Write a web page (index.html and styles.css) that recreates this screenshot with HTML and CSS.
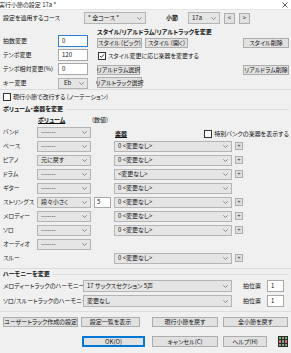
FILE: index.html
```html
<!DOCTYPE html>
<html lang="ja">
<head>
<meta charset="utf-8">
<title>実行小節の設定</title>
<link rel="stylesheet" href="styles.css">
</head>
<body>
<div class="win">
  <div class="titlebar">
    <span class="title">実行小節の設定 17a *</span>
    <svg class="close" width="6" height="6" viewBox="0 0 6 6"><path d="M0.5 0.5L5.5 5.5M5.5 0.5L0.5 5.5" stroke="#333" stroke-width="0.8"/></svg>
  </div>
  <div class="content">
    <div class="course">
      <span class="course-lbl">設定を適用するコース</span>
      <div class="sel w-course"><span>* 全コース *</span><svg class="chev" width="5" height="3" viewBox="0 0 5 3"><path d="M0.3 0.3L2.5 2.5L4.7 0.3" fill="none" stroke="#666" stroke-width="0.7"/></svg></div>
      <span class="bold bar-lbl">小節</span>
      <div class="sel w-bar"><span>17a</span><svg class="chev" width="5" height="3" viewBox="0 0 5 3"><path d="M0.3 0.3L2.5 2.5L4.7 0.3" fill="none" stroke="#666" stroke-width="0.7"/></svg></div>
      <button class="btn nav">&lt;</button>
      <button class="btn nav">&gt;</button>
    </div>

    <div class="top">
      <div class="tleft">
        <div class="frow"><span>拍数変更</span><div class="inp focus">0</div></div>
        <div class="frow"><span>テンポ変更</span><div class="inp">120</div></div>
        <div class="frow"><span>テンポ相対変更(%)</span><div class="inp">0</div></div>
        <div class="frow"><span>キー変更</span><div class="sel w-key"><span>Eb</span><svg class="chev" width="5" height="3" viewBox="0 0 5 3"><path d="M0.3 0.3L2.5 2.5L4.7 0.3" fill="none" stroke="#666" stroke-width="0.7"/></svg></div></div>
      </div>
      <div class="tright">
        <div class="cap bold">スタイル/リアルドラム/リアルトラックを変更</div>
        <div class="brow b1">
          <button class="btn w-pick">スタイル (ピック)</button>
          <button class="btn w-open">スタイル (開く)</button>
          <button class="btn w-del push">スタイル削除</button>
        </div>
        <div class="chkrow c1"><span class="chk on"><svg width="6" height="6" viewBox="0 0 6 6"><path d="M1 3L2.4 4.5L5 1.3" fill="none" stroke="#222" stroke-width="0.9"/></svg></span>スタイル変更に応じ楽器を変更する</div>
        <div class="brow b2">
          <button class="btn w-rd">リアルドラム選択</button>
          <button class="btn w-del push">リアルドラム削除</button>
        </div>
        <div class="brow b3">
          <button class="btn w-rt">リアルトラック選択</button>
        </div>
      </div>
    </div>

    <div class="sep s1"></div>

    <div class="chkrow c2"><span class="chk"></span>現行小節で改行する (ノーテーション)</div>

    <div class="gcap g1"><span class="bold">ボリューム・楽器を変更</span><span class="gline"></span></div>

    <div class="vgrid">
      <div class="vhead"><span></span><span class="bold ul vol-h">ボリューム</span><span class="num-h">(数値)</span><span></span><span></span></div>

      <div class="vrow"><span class="vlab">バンド</span><div class="sel"><span>-------</span><svg class="chev" width="5" height="3" viewBox="0 0 5 3"><path d="M0.3 0.3L2.5 2.5L4.7 0.3" fill="none" stroke="#666" stroke-width="0.7"/></svg></div><span></span><div class="inst-head"><span class="bold ul">楽器</span><span class="special"><span class="chk"></span>特別バンクの楽器を表示する</span></div></div>

      <div class="vrow"><span class="vlab">ベース</span><div class="sel"><span>-------</span><svg class="chev" width="5" height="3" viewBox="0 0 5 3"><path d="M0.3 0.3L2.5 2.5L4.7 0.3" fill="none" stroke="#666" stroke-width="0.7"/></svg></div><span></span><div class="sel"><span>0 &lt;変更なし&gt;</span><svg class="chev" width="5" height="3" viewBox="0 0 5 3"><path d="M0.3 0.3L2.5 2.5L4.7 0.3" fill="none" stroke="#666" stroke-width="0.7"/></svg></div><button class="btn plus">+</button></div>

      <div class="vrow"><span class="vlab">ピアノ</span><div class="sel"><span>元に戻す</span><svg class="chev" width="5" height="3" viewBox="0 0 5 3"><path d="M0.3 0.3L2.5 2.5L4.7 0.3" fill="none" stroke="#666" stroke-width="0.7"/></svg></div><span></span><div class="sel"><span>0 &lt;変更なし&gt;</span><svg class="chev" width="5" height="3" viewBox="0 0 5 3"><path d="M0.3 0.3L2.5 2.5L4.7 0.3" fill="none" stroke="#666" stroke-width="0.7"/></svg></div><button class="btn plus">+</button></div>

      <div class="vrow"><span class="vlab">ドラム</span><div class="sel"><span>-------</span><svg class="chev" width="5" height="3" viewBox="0 0 5 3"><path d="M0.3 0.3L2.5 2.5L4.7 0.3" fill="none" stroke="#666" stroke-width="0.7"/></svg></div><span></span><div class="sel"><span>&lt;変更なし&gt;</span><svg class="chev" width="5" height="3" viewBox="0 0 5 3"><path d="M0.3 0.3L2.5 2.5L4.7 0.3" fill="none" stroke="#666" stroke-width="0.7"/></svg></div><button class="btn plus">+</button></div>

      <div class="vrow"><span class="vlab">ギター</span><div class="sel"><span>-------</span><svg class="chev" width="5" height="3" viewBox="0 0 5 3"><path d="M0.3 0.3L2.5 2.5L4.7 0.3" fill="none" stroke="#666" stroke-width="0.7"/></svg></div><span></span><div class="sel"><span>0 &lt;変更なし&gt;</span><svg class="chev" width="5" height="3" viewBox="0 0 5 3"><path d="M0.3 0.3L2.5 2.5L4.7 0.3" fill="none" stroke="#666" stroke-width="0.7"/></svg></div><span></span></div>

      <div class="vrow"><span class="vlab">ストリングス</span><div class="sel"><span>段々小さく</span><svg class="chev" width="5" height="3" viewBox="0 0 5 3"><path d="M0.3 0.3L2.5 2.5L4.7 0.3" fill="none" stroke="#666" stroke-width="0.7"/></svg></div><div class="inp num">5</div><div class="sel"><span>0 &lt;変更なし&gt;</span><svg class="chev" width="5" height="3" viewBox="0 0 5 3"><path d="M0.3 0.3L2.5 2.5L4.7 0.3" fill="none" stroke="#666" stroke-width="0.7"/></svg></div><button class="btn plus">+</button></div>

      <div class="vrow"><span class="vlab">メロディー</span><div class="sel"><span>-------</span><svg class="chev" width="5" height="3" viewBox="0 0 5 3"><path d="M0.3 0.3L2.5 2.5L4.7 0.3" fill="none" stroke="#666" stroke-width="0.7"/></svg></div><span></span><div class="sel"><span>0 &lt;変更なし&gt;</span><svg class="chev" width="5" height="3" viewBox="0 0 5 3"><path d="M0.3 0.3L2.5 2.5L4.7 0.3" fill="none" stroke="#666" stroke-width="0.7"/></svg></div><button class="btn plus">+</button></div>

      <div class="vrow"><span class="vlab">ソロ</span><div class="sel"><span>-------</span><svg class="chev" width="5" height="3" viewBox="0 0 5 3"><path d="M0.3 0.3L2.5 2.5L4.7 0.3" fill="none" stroke="#666" stroke-width="0.7"/></svg></div><span></span><div class="sel"><span>0 &lt;変更なし&gt;</span><svg class="chev" width="5" height="3" viewBox="0 0 5 3"><path d="M0.3 0.3L2.5 2.5L4.7 0.3" fill="none" stroke="#666" stroke-width="0.7"/></svg></div><button class="btn plus">+</button></div>

      <div class="vrow"><span class="vlab">オーディオ</span><div class="sel"><span>-------</span><svg class="chev" width="5" height="3" viewBox="0 0 5 3"><path d="M0.3 0.3L2.5 2.5L4.7 0.3" fill="none" stroke="#666" stroke-width="0.7"/></svg></div><span></span><span></span><span></span></div>

      <div class="vrow"><span class="vlab">スルー</span><span></span><span></span><div class="sel"><span>0 &lt;変更なし&gt;</span><svg class="chev" width="5" height="3" viewBox="0 0 5 3"><path d="M0.3 0.3L2.5 2.5L4.7 0.3" fill="none" stroke="#666" stroke-width="0.7"/></svg></div><button class="btn plus">+</button></div>
    </div>

    <div class="sep s2"></div>

    <div class="gcap g2"><span class="bold">ハーモニーを変更</span><span class="gline"></span></div>

    <div class="hrow h1">
      <span class="hlab">メロディートラックのハーモニー</span>
      <div class="sel w-harm"><span>17 サックスセクション 5声</span><svg class="chev" width="5" height="3" viewBox="0 0 5 3"><path d="M0.3 0.3L2.5 2.5L4.7 0.3" fill="none" stroke="#666" stroke-width="0.7"/></svg></div>
      <span class="pos-lbl">拍位置</span>
      <div class="inp w-pos">1</div>
    </div>
    <div class="hrow h2">
      <span class="hlab">ソロ/スルートラックのハーモニー</span>
      <div class="sel w-harm"><span>変更なし</span><svg class="chev" width="5" height="3" viewBox="0 0 5 3"><path d="M0.3 0.3L2.5 2.5L4.7 0.3" fill="none" stroke="#666" stroke-width="0.7"/></svg></div>
      <span class="pos-lbl">拍位置</span>
      <div class="inp w-pos">1</div>
    </div>

    <div class="sep s3"></div>

    <div class="actions a1">
      <button class="btn w-user">ユーザートラック作成の設定</button>
      <button class="btn w-list">設定一覧を表示</button>
      <button class="btn w-cur">現行小節を戻す</button>
      <button class="btn w-all">全小節を戻す</button>
    </div>
    <div class="actions a2">
      <button class="btn ok">OK(O)</button>
      <button class="btn w-cur">キャンセル(C)</button>
      <button class="btn w-help">ヘルプ(H)</button>
      <svg class="appicon" width="10" height="11" viewBox="0 0 10 11">
        <rect x="0" y="0" width="10" height="11" fill="#2b2b2b"/>
        <rect x="1" y="1" width="2" height="2" fill="#6fbf5a"/>
        <rect x="4" y="1" width="2" height="2" fill="#9a9a9a"/>
        <rect x="7" y="1" width="2" height="2" fill="#6fbf5a"/>
        <rect x="1" y="4" width="2" height="3" fill="#e06a8a"/>
        <rect x="4" y="4" width="2" height="3" fill="#5fb85a"/>
        <rect x="7" y="4" width="2" height="3" fill="#e06a8a"/>
        <rect x="1" y="8" width="2" height="2" fill="#9a9a9a"/>
        <rect x="4" y="8" width="2" height="2" fill="#6fbf5a"/>
        <rect x="7" y="8" width="2" height="2" fill="#9a9a9a"/>
      </svg>
    </div>
  </div>
</div>
</body>
</html>
```

FILE: styles.css
```css
* { box-sizing: border-box; margin: 0; padding: 0; }

html, body {
  width: 291px;
  height: 353px;
  overflow: hidden;
}

body {
  font-family: "Noto Sans CJK JP", "Noto Sans", "Liberation Sans", sans-serif;
  font-size: 6px;
  line-height: 1;
  color: #111;
  background: #f0f0f0;
  font-feature-settings: "palt" 1;
}

.win {
  width: 291px;
  height: 353px;
  background: #f0f0f0;
}

.titlebar {
  height: 10px;
  background: #fff;
  display: flex;
  align-items: center;
  justify-content: space-between;
  padding: 0 3px 0 0;
  border-bottom: 1px solid #e4e4e4;
}
.title { font-size: 6px; color: #222; margin-left: -1px; }
.close { display: block; }

.content { padding: 0 2px 0 3px; }

.bold { font-weight: 700; }
.ul { text-decoration: underline; }

/* generic controls */
.sel {
  height: 11px;
  background: #e5e5e5;
  border: 1px solid #b4b4b4;
  display: flex;
  align-items: center;
  justify-content: space-between;
  padding: 0 3px 0 3px;
  white-space: nowrap;
}
.chev { flex: none; display: block; }

.inp {
  height: 12px;
  background: #fff;
  border: 1px solid #a8a8a8;
  display: flex;
  align-items: center;
  padding-left: 3px;
}
.inp.focus { border-color: #2a7fd4; }

.btn {
  font: inherit;
  font-feature-settings: "palt" 1;
  color: #111;
  background: #e1e1e1;
  border: 1px solid #adadad;
  height: 10px;
  display: flex;
  align-items: center;
  justify-content: center;
  white-space: nowrap;
  line-height: 1;
  padding: 0;
  overflow: visible;
}

.chk {
  width: 8px;
  height: 8px;
  background: #fff;
  border: 1px solid #333;
  display: inline-flex;
  align-items: center;
  justify-content: center;
  flex: none;
}
.chk svg { display: block; }

/* course row */
.course {
  margin-top: 2px;
  height: 12px;
  display: flex;
  align-items: center;
}
.course-lbl { width: 81px; }
.w-course { width: 62px; height: 12px; }
.bar-lbl { margin-left: 20px; width: 22px; }
.w-bar { width: 32px; height: 12px; }
.btn.nav { width: 11px; height: 11px; margin-left: 4px; }

/* top section */
.top {
  margin-top: 4px;
  height: 61px;
  display: flex;
}
.tleft {
  width: 85px;
  padding-top: 7px;
  display: flex;
  flex-direction: column;
  gap: 2px;
}
.frow {
  height: 12px;
  display: flex;
  align-items: center;
  justify-content: space-between;
  white-space: nowrap;
}
.frow .inp { width: 30px; }
.w-key { width: 30px; height: 11px; padding-left: 5px; }

.tright {
  margin-left: 9px;
  flex: 1;
  display: flex;
  flex-direction: column;
}
.cap { height: 7px; line-height: 7px; white-space: nowrap; }
.brow { display: flex; align-items: center; }
.b1 { margin-top: 3px; }
.b2 { margin-top: 4px; }
.b3 { margin-top: 2px; }
.b3 .btn { height: 11px; }
.push { margin-left: auto; }
.w-pick { width: 45px; }
.w-open { width: 43px; margin-left: 3px; }
.w-del { width: 46px; }
.w-rd { width: 43px; }
.w-rt { width: 45px; }

.chkrow {
  display: flex;
  align-items: center;
  gap: 2px;
  white-space: nowrap;
}
.c1 { margin-top: 3px; height: 10px; margin-left: 1px; }
.c2 { margin-top: 3px; height: 8px; }

.sep { height: 1px; background: #dcdcdc; margin-left: -3px; margin-right: -2px; }
.s1 { margin-top: 0; }
.s2 { margin-top: 3px; }
.s3 { margin-top: 4px; }

.gcap {
  display: flex;
  align-items: center;
  height: 8px;
  white-space: nowrap;
}
.gline { flex: 1; height: 1px; background: #dcdcdc; margin-left: 3px; }
.g1 { margin-top: 4px; }
.g2 { margin-top: 1px; }

/* volume grid */
.vgrid { margin-top: 3px; }
.vhead, .vrow {
  display: grid;
  grid-template-columns: 31px 54px 17px 118px 8px;
  column-gap: 3px;
  align-items: center;
}
.vhead { height: 8px; }
.vol-h { padding-left: 1px; }
.num-h { margin-left: -2px; white-space: nowrap; }
.vrow { height: 14px; }
.vhead + .vrow { margin-top: 1px; }
.vlab { white-space: nowrap; color: #222; }
.inp.num { height: 11px; width: 17px; padding-left: 2px; }
.btn.plus { width: 8px; height: 8px; font-size: 6px; color: #333; }

.inst-head {
  grid-column: 4 / 6;
  display: flex;
  align-items: center;
  justify-content: space-between;
  padding: 3px 0 0 1px;
  margin-right: -46px;
}
.special { display: flex; align-items: center; gap: 2px; white-space: nowrap; }

/* harmony */
.hrow {
  display: flex;
  align-items: center;
  height: 12px;
}
.h1 { margin-top: 2px; }
.h2 { margin-top: 3px; }
.hlab { width: 80px; white-space: nowrap; }
.w-harm { width: 149px; height: 12px; }
.pos-lbl { margin-left: 11px; width: 24px; }
.w-pos { width: 17px; height: 12px; }

/* bottom buttons */
.actions { display: flex; align-items: center; }
.a1 { margin-top: 5px; height: 10px; }
.a2 { margin-top: 9px; height: 11px; }
.a1 .btn { height: 10px; }
.a2 .btn { height: 11px; }
.w-user { width: 75px; }
.w-list { width: 59px; margin-left: 3px; }
.a1 .w-cur { margin-left: 12px; }
.w-cur { width: 66px; }
.w-all { width: 65px; margin-left: 5px; }
.btn.ok { width: 63px; margin-left: 79px; border: 1px solid #0078d7; box-shadow: inset 0 0 0 1px #0078d7; }
.a2 .w-cur { margin-left: 7px; }
.w-help { width: 44px; margin-left: 5px; }
.appicon { display: block; margin-left: 11px; }
```
